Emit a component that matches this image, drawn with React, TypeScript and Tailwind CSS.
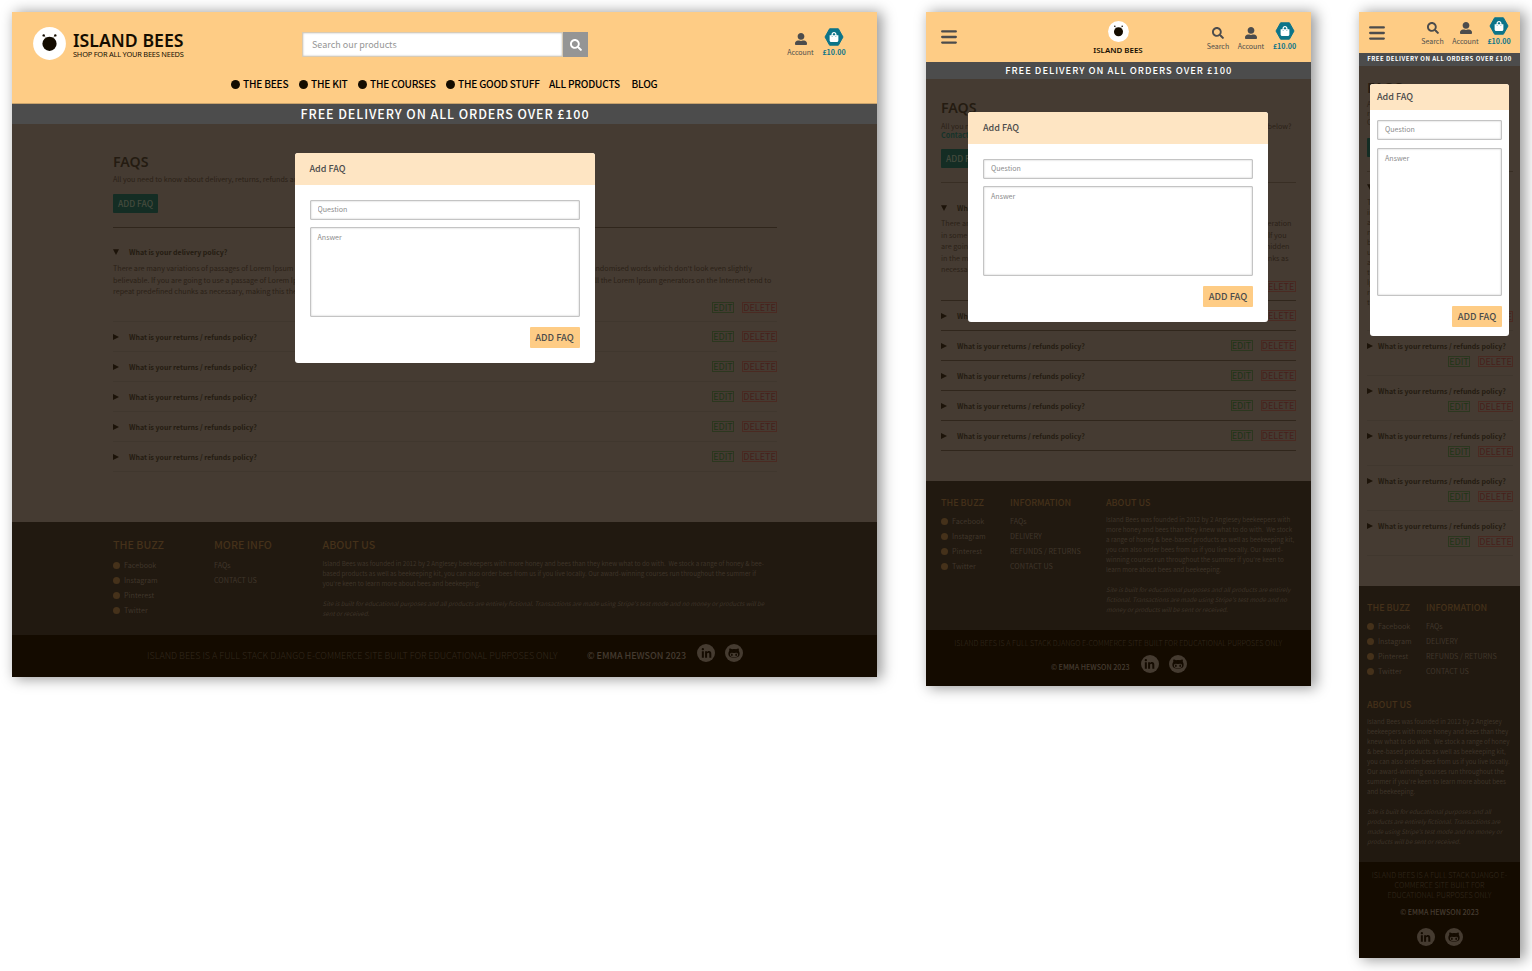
import React from "react";
import { FaSearch, FaUserAlt, FaShoppingBag, FaLinkedinIn, FaGithubAlt } from "react-icons/fa";
import clsx from "clsx";

const LOGO_FONT = "font-['Noto_Sans',sans-serif]";

function BeeLogo({ className }: { className: string }) {
  return (
    <svg viewBox="0 0 33 33" className={clsx("block shrink-0", className)}>
      <circle cx="16.5" cy="16.5" r="16.4" fill="#fff" />
      <circle cx="16.5" cy="16.8" r="7.1" fill="#140c00" />
      <path d="M10.6 8.4l3 3M22.4 8.4l-3 3" stroke="#140c00" strokeWidth=".4" />
      <circle cx="10.7" cy="8.4" r="1.2" fill="#140c00" />
      <circle cx="22.3" cy="8.4" r="1.2" fill="#140c00" />
    </svg>
  );
}

function Hamburger() {
  return (
    <svg viewBox="0 0 16 14" className="block h-[14px] w-4">
      <path d="M1.2 1.4h13.6M1.2 7h13.6M1.2 12.6h13.6" stroke="#4c4c4c" strokeWidth="2.3" strokeLinecap="round" />
    </svg>
  );
}

function Basket() {
  return (
    <div className="flex w-[24px] flex-col items-center">
      <div className="grid h-[18px] w-5 place-items-center">
        <svg viewBox="0 0 20 18" className="col-start-1 row-start-1 h-[18px] w-5">
          <path d="M5.6.8h8.8l4.6 8.2-4.6 8.2H5.6L1 9z" fill="#0c7489" stroke="#0c7489" strokeLinejoin="round" />
        </svg>
        <FaShoppingBag className="col-start-1 row-start-1 mb-px size-[10px] text-white" />
      </div>
      <span className="mt-px whitespace-nowrap text-[7.1px] leading-[10px] font-bold text-[#0c7489]">£10.00</span>
    </div>
  );
}

function IconLabel({ icon, label, className }: { icon: React.ReactNode; label: string; className: string }) {
  return (
    <div className={clsx("flex flex-col items-center text-[#4c4c4c]", className)}>
      {icon}
      <span className="mt-[2px] whitespace-nowrap text-[7px] leading-[10px]">{label}</span>
    </div>
  );
}

function SearchItem() {
  return <IconLabel className="w-[23px]" icon={<FaSearch className="size-3" />} label="Search" />;
}

function AccountItem() {
  return <IconLabel className="w-[27px]" icon={<FaUserAlt className="size-3" />} label="Account" />;
}

function NavItem({ label, dot, className }: { label: string; dot?: boolean; className: string }) {
  return (
    <div className={clsx("flex shrink-0 items-center", className)}>
      {dot && <span className="mr-[3px] size-[9px] shrink-0 rounded-full bg-[#140c00]" />}
      <span className="whitespace-nowrap">{label}</span>
    </div>
  );
}

function Modal({ className, head, body, area }: { className: string; head: string; body: string; area: string }) {
  const field =
    "block w-full resize-none rounded-[1px] border border-[#c4c4c4] bg-white px-[7px] text-[7.1px] text-[#4c4c4c] shadow-[inset_0_0_2px_rgba(0,0,0,0.25)] outline-none placeholder:text-[#8d8d8d] placeholder:opacity-100";
  return (
    <div className={clsx("absolute overflow-hidden rounded-[3px] bg-white", className)}>
      <div className={clsx("flex items-center bg-[#fee5c3] text-[9px] leading-[12px] font-medium text-[#4c4c4c]", head)}>
        Add FAQ
      </div>
      <div className={clsx("flex flex-col", body)}>
        <input className={clsx(field, "h-5 pb-[2px]")} placeholder="Question" />
        <textarea className={clsx(field, "py-[4px] leading-[11px]", area)} placeholder="Answer" />
        <button className="mt-[10px] h-[21px] w-[50px] self-end rounded-[1px] bg-[#fecc85] pb-px text-[9.3px] leading-[12px] font-medium whitespace-nowrap text-[#4c4c4c]">
          ADD FAQ
        </button>
      </div>
    </div>
  );
}

function Actions() {
  return (
    <div className="flex gap-[8px] text-[9px] leading-[9px] whitespace-nowrap">
      <span className="h-[11px] w-[22px] border border-[#2c371f] text-center text-[#1f3517]">EDIT</span>
      <span className="h-[11px] w-[35px] border border-[#4a2a22] text-center text-[#47201b]">DELETE</span>
    </div>
  );
}

function Arrow({ open }: { open?: boolean }) {
  return (
    <svg viewBox="0 0 6 6" className="size-[6px] shrink-0">
      {open ? <path d="M0 .2h6L3 5.9z" fill="#1c1309" /> : <path d="M0 0L6 3 0 6z" fill="#1c1309" />}
    </svg>
  );
}

function Question({ text, open, gap }: { text: string; open?: boolean; gap: string }) {
  return (
    <div className={clsx("flex items-center text-[7px] leading-[12px] font-bold whitespace-nowrap text-[#241b11]", gap)}>
      <Arrow open={open} />
      {text}
    </div>
  );
}

function PageTitle() {
  return <h1 className={clsx("text-[14.2px] leading-[20px] font-semibold text-[#241b11]", LOGO_FONT)}>FAQS</h1>;
}

function AddButton({ className }: { className: string }) {
  return (
    <div className={clsx("flex h-[19px] w-[45px] items-center justify-center rounded-[1px] bg-[#142d24] pb-[2px] text-[8.5px] leading-[12px] font-medium whitespace-nowrap text-[#454b3e]", className)}>
      ADD FAQ
    </div>
  );
}

function Social() {
  return (
    <div className="flex gap-[10px]">
      <span className="flex size-[18px] items-center justify-center rounded-full bg-[#453b30] text-[#140b00]">
        <FaLinkedinIn className="size-[11px]" />
      </span>
      <span className="flex size-[18px] items-center justify-center rounded-full bg-[#453b30] text-[#140b00]">
        <FaGithubAlt className="size-[12px]" />
      </span>
    </div>
  );
}

function FooterColumn({ title, items, dots, size, className }: { title: string; items: string[]; dots?: boolean; size: string; className: string }) {
  return (
    <div className={clsx("shrink-0 whitespace-nowrap", className)}>
      <h2 className={clsx("leading-[12px] font-medium text-[#45311a]", size)}>{title}</h2>
      <ul className="text-[7.2px] leading-[15px] text-[#40362b]">
        {items.map((t) => (
          <li key={t} className="flex items-center">
            {dots && <span className="mr-1 size-[7px] rounded-full bg-[#45311a]" />}
            {t}
          </li>
        ))}
      </ul>
    </div>
  );
}

function Lines({ lines, className }: { lines: string[]; className: string }) {
  return (
    <p className={clsx("whitespace-pre", className)}>
      {lines.map((l, i) => (
        <span key={i} className="block">{l}</span>
      ))}
    </p>
  );
}

const FRAME =
  "relative flex shrink-0 flex-col bg-[#453b32] shadow-[4px_1px_13px_1px_rgba(0,0,0,0.4)]";
const SOCIALS = ["Facebook", "Instagram", "Pinterest", "Twitter"];
const INFO = ["FAQs", "DELIVERY", "REFUNDS / RETURNS", "CONTACT US"];
const RETURNS = "What is your returns / refunds policy?";

function Desktop() {
  return (
    <section className={clsx(FRAME, "h-[665px] w-[865px]")}>
      <header className="h-[92px] border-b border-[#c9a36d] bg-[#fecc85]">
        <div className="flex h-[63px] items-start pl-[21px]">
          <BeeLogo className="mt-[15px] size-[33px]" />
          <div className={clsx("mt-[17px] ml-[7px] w-[229px] whitespace-nowrap text-[#140c00]", LOGO_FONT)}>
            <div className="text-[17.7px] leading-[22px] font-semibold">ISLAND BEES</div>
            <div className="-mt-px text-[7.4px] leading-[8px] tracking-[-0.2px]">SHOP FOR ALL YOUR BEES NEEDS</div>
          </div>
          <div className="mt-5 flex h-[25px] w-[286px] shadow-[inset_0_0_2px_rgba(0,0,0,0.4)]">
            <div className="flex flex-1 items-center border border-[#d8cbb5] bg-white pl-[9px] text-[9px] leading-[12px] text-[#959595] shadow-[inset_0_0_2px_rgba(0,0,0,0.3)]">
              Search our products
            </div>
            <div className="flex w-[25px] items-center justify-center bg-[#959595] text-white">
              <FaSearch className="size-3" />
            </div>
          </div>
          <div className="mt-[16px] ml-[199px] flex">
            <div className="mt-[5px]"><AccountItem /></div>
            <div className="ml-[8px]"><Basket /></div>
          </div>
        </div>
        <nav className="flex h-[18px] items-center pl-[219px] text-[10.1px] leading-[12px] font-medium tracking-[-0.2px] text-black">
          <NavItem dot label="THE BEES" className="w-[68px]" />
          <NavItem dot label="THE KIT" className="w-[59px]" />
          <NavItem dot label="THE COURSES" className="w-[88px]" />
          <NavItem dot label="THE GOOD STUFF" className="w-[103px]" />
          <NavItem label="ALL PRODUCTS" className="w-[82.5px]" />
          <NavItem label="BLOG" className="w-[30px]" />
        </nav>
      </header>
      <div className="flex h-5 items-center justify-center bg-[#4c4c4c] pb-px pl-px text-[12.5px] leading-[12px] font-medium tracking-[0.92px] whitespace-nowrap text-white">
        FREE DELIVERY ON ALL ORDERS OVER £100
      </div>
      <main className="h-[398px] pt-7 pr-[100px] pl-[101px]">
        <PageTitle />
        <p className="mt-[1px] text-[7.15px] leading-[12px] whitespace-nowrap text-[#2b2117]">All you need to know about delivery, returns, refunds and more.</p>
        <AddButton className="mt-[9px]" />
        <hr className="mt-[14px] border-[#30261c]" />
        <div className="mt-[18px]"><Question open gap="gap-[10px]" text="What is your delivery policy?" /></div>
        <Lines
          className="mt-[5px] text-[7.17px] leading-[11.6px] text-[#2b2117]"
          lines={[
            "There are many variations of passages of Lorem Ipsum available, but the majority have suffered alteration in some form, by injected humour, or randomised words which don't look even slightly",
            "believable. If you are going to use a passage of Lorem Ipsum, you need to be sure there isn't anything embarrassing hidden in the middle of text. All the Lorem Ipsum generators on the Internet tend to",
            "repeat predefined chunks as necessary, making this the first true generator on the Internet.",
          ]}
        />
        <div className="mt-[4px] flex justify-end"><Actions /></div>
        <div className="mt-[8px] border-t border-[#40372e]">
          {[0, 1, 2, 3, 4].map((i) => (
            <div key={i} className="flex h-[30px] items-center justify-between border-b border-[#40372e] pt-px">
              <Question gap="gap-[10px]" text={RETURNS} />
              <Actions />
            </div>
          ))}
        </div>
      </main>
      <footer className="flex h-[113px] bg-[#211910] pt-[17px] pl-[101px]">
        <FooterColumn title="THE BUZZ" dots items={SOCIALS} size="text-[10.7px] mb-[7px]" className="w-[101px]" />
        <FooterColumn title="MORE INFO" items={["FAQs", "CONTACT US"]} size="text-[10.7px] mb-[7px]" className="w-[108.5px]" />
        <div>
          <h2 className="text-[10.7px] leading-[12px] font-medium text-[#45311a]">ABOUT US</h2>
          <Lines
            className="mt-[8px] text-[6.26px] leading-[10px] text-[#3e3429]"
            lines={[
              "Island Bees was founded in 2012 by 2 Anglesey beekeepers with more honey and bees than they knew what to do with.  We stock a range of honey & bee-",
              "based products as well as beekeeping kit, you can also order bees from us if you live locally. Our award-winning courses run throughout the summer if",
              "you're keen to learn more about bees and beekeeping.",
            ]}
          />
          <Lines
            className="mt-[10px] text-[6.1px] leading-[10px] text-[#3e3429] italic"
            lines={[
              "Site is built for educational purposes and all products are entirely fictional. Transactions are made using Stripe's test mode and no money or products will be",
              "sent or received.",
            ]}
          />
        </div>
      </footer>
      <div className="flex h-[42px] items-start bg-[#140b00] pt-[9px] pl-[135px] whitespace-nowrap">
        <span className="mt-[5px] w-[440px] text-[9px] leading-[14px] font-light text-[#33291d]">
          ISLAND BEES IS A FULL STACK DJANGO E-COMMERCE SITE BUILT FOR EDUCATIONAL PURPOSES ONLY
        </span>
        <span className="mt-[5px] w-[110px] text-[9px] leading-[14px] font-medium text-[#453b30]">© EMMA HEWSON 2023</span>
        <Social />
      </div>
      <Modal className="top-[141px] left-[282.5px] h-[210px] w-[300px]" head="h-8 pl-[15px]" body="px-[15px] pt-[15px]" area="mt-[7px] h-[90px]" />
    </section>
  );
}

function Tablet() {
  return (
    <section className={clsx(FRAME, "ml-[49px] h-[674px] w-[384.5px]")}>
      <header className="flex h-[50px] items-start bg-[#fecc85] pl-[15px]">
        <div className="mt-[18px]"><Hamburger /></div>
        <div className="mt-[9px] ml-[136px] flex w-[50px] flex-col items-center">
          <BeeLogo className="size-[21px]" />
          <span className={clsx("mt-[2px] text-[7.9px] leading-[12px] font-semibold whitespace-nowrap text-[#140c00]", LOGO_FONT)}>ISLAND BEES</span>
        </div>
        <div className="mt-[15px] ml-[63.5px] flex gap-[8px]">
          <SearchItem />
          <AccountItem />
          <div className="-mt-[5px]"><Basket /></div>
        </div>
      </header>
      <div className="flex h-[17px] items-center justify-center bg-[#4c4c4c] pb-px pl-px text-[9.4px] leading-[12px] font-medium tracking-[0.97px] whitespace-nowrap text-white">
        FREE DELIVERY ON ALL ORDERS OVER £100
      </div>
      <main className="h-[402px] px-[15px] pt-[19px]">
        <PageTitle />
        <div className="mt-[4px] flex justify-between text-[7.2px] leading-[9px] whitespace-nowrap text-[#2b2117]">
          <span>All you need to know about delivery, returns, refunds</span>
          <span className="mr-[4px]">below?</span>
        </div>
        <p className="text-[7.2px] leading-[9px] font-bold text-[#15332a]">Contact us</p>
        <AddButton className="mt-[9px]" />
        <hr className="mt-[14px] border-[#382e24]" />
        <div className="mt-[19px]"><Question open gap="gap-[10px]" text="What is your delivery policy?" /></div>
        <div className="mt-[4px] text-[7.2px] leading-[11.6px] whitespace-nowrap text-[#2b2117]">
          {[
            ["There are many variations of passages", "suffered alteration", "mr-[4px]"],
            ["in some form, by injected humour", "believable. If you", "mr-[9px]"],
            ["are going to use a passage", "embarrassing hidden", "mr-[6px]"],
            ["in the middle of text", "predefined chunks as", "mr-[7px]"],
            ["necessary, making this", "", ""],
          ].map(([a, b, c]) => (
            <div key={a} className="flex justify-between"><span>{a}</span><span className={c}>{b}</span></div>
          ))}
        </div>
        <div className="mt-[5px] flex justify-end"><Actions /></div>
        <div className="mt-[8px] border-t border-[#30261c]">
          {[0, 1, 2, 3, 4].map((i) => (
            <div key={i} className="flex h-[30px] items-center justify-between border-b border-[#30261c] pt-px">
              <Question gap="gap-[10px]" text={RETURNS} />
              <Actions />
            </div>
          ))}
        </div>
      </main>
      <footer className="flex h-[149px] bg-[#211910] pt-4 pl-[15px]">
        <FooterColumn title="THE BUZZ" dots items={SOCIALS} size="text-[9px] mb-[5px]" className="w-[69px]" />
        <FooterColumn title="INFORMATION" items={INFO} size="text-[9px] mb-[5px]" className="w-[96px]" />
        <div>
          <h2 className="text-[9px] leading-[12px] font-medium text-[#45311a]">ABOUT US</h2>
          <Lines
            className="mt-[6px] text-[6.26px] leading-[10px] text-[#3e3429]"
            lines={[
              "Island Bees was founded in 2012 by 2 Anglesey beekeepers with",
              "more honey and bees than they knew what to do with.  We stock",
              "a range of honey & bee-based products as well as beekeeping kit,",
              "you can also order bees from us if you live locally. Our award-",
              "winning courses run throughout the summer if you're keen to",
              "learn more about bees and beekeeping.",
            ]}
          />
          <Lines
            className="mt-[10px] text-[6.1px] leading-[10px] text-[#3e3429] italic"
            lines={[
              "Site is built for educational purposes and all products are entirely",
              "fictional. Transactions are made using Stripe's test mode and no",
              "money or products will be sent or received.",
            ]}
          />
        </div>
      </footer>
      <div className="h-[56px] bg-[#140b00] pt-[7px] text-center whitespace-nowrap">
        <div className="text-[7.2px] leading-[12px] font-light text-[#33291d]">
          ISLAND BEES IS A FULL STACK DJANGO E-COMMERCE SITE BUILT FOR EDUCATIONAL PURPOSES ONLY
        </div>
        <div className="mt-[6px] flex pl-[125px]">
          <span className="mt-[6px] w-[89.5px] text-left text-[7.15px] leading-[12px] font-medium text-[#453b30]">© EMMA HEWSON 2023</span>
          <Social />
        </div>
      </div>
      <Modal className="top-[100px] left-[42px] h-[210px] w-[300px]" head="h-8 pl-[15px]" body="px-[15px] pt-[15px]" area="mt-[7px] h-[90px]" />
    </section>
  );
}

function Mobile() {
  return (
    <section className={clsx(FRAME, "ml-[48.5px] h-[946px] w-[161px]")}>
      <header className="flex h-[41px] items-start bg-[#fecc85] pl-[10px]">
        <div className="mt-[14px]"><Hamburger /></div>
        <div className="mt-[10px] ml-[36px] flex gap-[8px]">
          <SearchItem />
          <AccountItem />
          <div className="-mt-[5px]"><Basket /></div>
        </div>
      </header>
      <div className="flex h-[13px] items-center justify-center bg-[#4c4c4c] pb-px text-[6px] leading-[10px] font-bold tracking-[0.5px] whitespace-nowrap text-white">
        FREE DELIVERY ON ALL ORDERS OVER £100
      </div>
      <main className="h-[520px] pt-3 pr-[7px] pl-[8px]">
        <PageTitle />
        <Lines className="mt-[2px] text-[7.2px] leading-[9.2px] text-[#2b2117]" lines={["All you need to know about", "returns, refunds"]} />
        <p className="text-[7.2px] leading-[9.2px] text-[#2b2117]">Contact us</p>
        <AddButton className="mt-[10px]" />
        <hr className="mt-[14px] border-[#382e24]" />
        <div className="mt-[9px]"><Question open gap="gap-[5px]" text="What is your delivery policy?" /></div>
        <Lines
          className="mt-[4px] text-[7.2px] leading-[10px] text-[#2b2117]"
          lines={["There are many variations", "in some form, by injected", "are many words which", "not look even slightly", "believable. If you are", "use a passage of Lorem", "anything embarrassing", "the middle of text. All", "Ipsum generators on the", "repeat predefined", "this the first true"]}
        />
        <div className="mt-[4px] flex justify-end"><Actions /></div>
        <div className="mt-[8px] border-t border-[#40372e]">
          {[0, 1, 2, 3, 4].map((i) => (
            <div key={i} className="h-[45px] border-b border-[#40372e] pt-[9px]">
              <Question gap="gap-[5px]" text={RETURNS} />
              <div className="mt-[4px] flex justify-end"><Actions /></div>
            </div>
          ))}
        </div>
      </main>
      <footer className="h-[276px] bg-[#211910] pt-4 pl-[8px]">
        <div className="flex">
          <FooterColumn title="THE BUZZ" dots items={SOCIALS} size="text-[9px] mb-[5px]" className="w-[59px]" />
          <FooterColumn title="INFORMATION" items={INFO} size="text-[9px] mb-[5px]" className="w-[90px]" />
        </div>
        <h2 className="mt-5 text-[9px] leading-[12px] font-medium text-[#45311a]">ABOUT US</h2>
        <Lines
          className="mt-[6px] text-[6.26px] leading-[10px] text-[#3e3429]"
          lines={[
            "Island Bees was founded in 2012 by 2 Anglesey",
            "beekeepers with more honey and bees than they",
            "knew what to do with.  We stock a range of honey",
            "& bee-based products as well as beekeeping kit,",
            "you can also order bees from us if you live locally.",
            "Our award-winning courses run throughout the",
            "summer if you're keen to learn more about bees",
            "and beekeeping.",
          ]}
        />
        <Lines
          className="mt-[10px] text-[6.1px] leading-[10px] text-[#3e3429] italic"
          lines={["Site is built for educational purposes and all", "products are entirely fictional. Transactions are", "made using Stripe's test mode and no money or", "products will be sent or received."]}
        />
      </footer>
      <div className="flex h-[96px] flex-col items-center bg-[#140b00] pt-[8px] text-center">
        <Lines
          className="text-[7.25px] leading-[10px] font-light text-[#33291d]"
          lines={["ISLAND BEES IS A FULL STACK DJANGO E-", "COMMERCE SITE BUILT FOR", "EDUCATIONAL PURPOSES ONLY"]}
        />
        <span className="mt-[6px] text-[7.15px] leading-[12px] font-medium whitespace-nowrap text-[#453b30]">© EMMA HEWSON 2023</span>
        <div className="mt-[10px]"><Social /></div>
      </div>
      <Modal className="top-[72px] left-[11px] h-[252px] w-[139px]" head="h-[26px] pl-[7px]" body="px-[7px] pt-[10px]" area="mt-[8px] h-[148px]" />
    </section>
  );
}

export default function App() {
  return (
    <div className="flex h-[971px] w-[1532px] items-start overflow-hidden bg-white pt-3 pl-3 font-['Noto_Sans_CJK_SC','Source_Sans_Pro',sans-serif]">
      <Desktop />
      <Tablet />
      <Mobile />
    </div>
  );
}
